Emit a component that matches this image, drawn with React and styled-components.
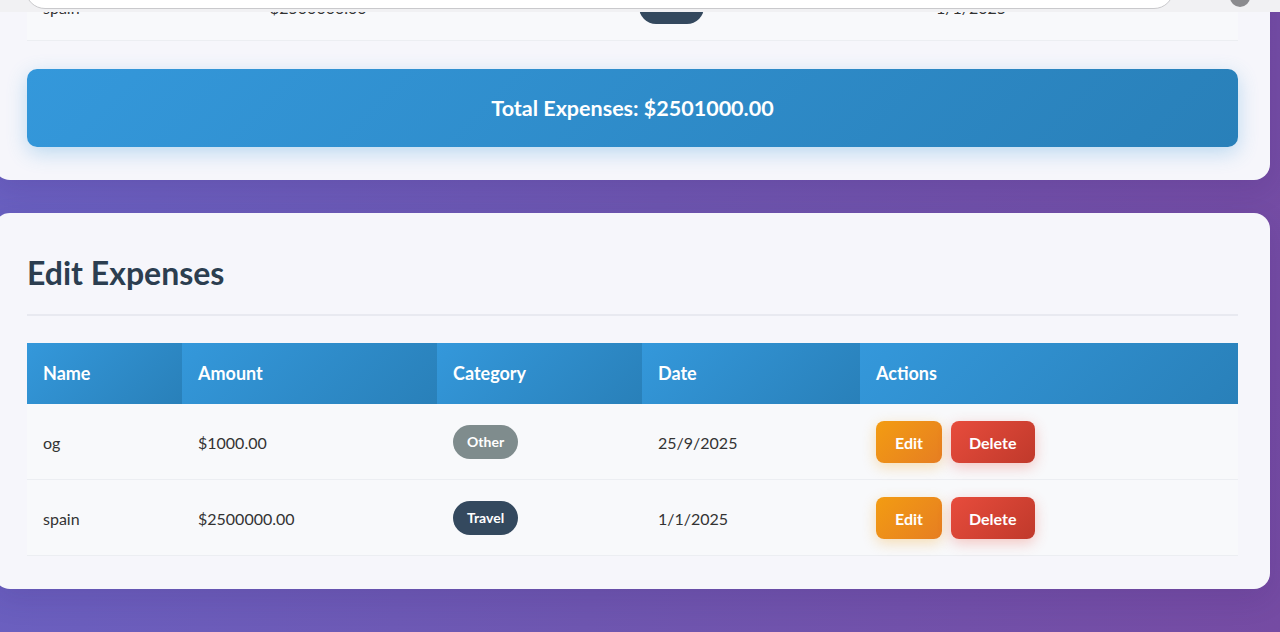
import React from 'react';
import styled, { createGlobalStyle } from 'styled-components';

const GlobalStyle = createGlobalStyle`
  html, body {
    margin: 0;
    min-height: 100%;
  }
  body {
    font-family: 'Segoe UI', Lato, 'Noto Sans', sans-serif;
    background: linear-gradient(100deg, #6a61c2 0%, #6e56b0 50%, #754ba3 100%);
    background-attachment: fixed;
    overflow: hidden;
  }
`;

const topRows = [
  { name: 'spain', amount: '$2500000.00', category: 'Travel', date: '1/1/2025' },
];

const rows = [
  { name: 'og', amount: '$1000.00', category: 'Other', date: '25/9/2025' },
  { name: 'spain', amount: '$2500000.00', category: 'Travel', date: '1/1/2025' },
];

const badgeColors = {
  Other: '#7f8c8d',
  Travel: '#34495e',
};

const App = () => {
  return (
    <>
      <GlobalStyle />
      <TopBar>
        <SearchBox />
        <Avatar />
      </TopBar>
      <Page>
        <Card>
          <Table>
            <colgroup>
              <col style={{ width: 227 }} />
              <col style={{ width: 369 }} />
              <col style={{ width: 297 }} />
              <col />
            </colgroup>
            <tbody>
              {topRows.map((r) => (
                <Row key={r.name}>
                  <Cell>{r.name}</Cell>
                  <Cell>{r.amount}</Cell>
                  <Cell>
                    <Badge $bg={badgeColors[r.category]}>{r.category}</Badge>
                  </Cell>
                  <Cell>{r.date}</Cell>
                </Row>
              ))}
            </tbody>
          </Table>
          <TotalBar>Total Expenses: $2501000.00</TotalBar>
        </Card>

        <Card>
          <Heading>Edit Expenses</Heading>
          <Table>
            <colgroup>
              <col style={{ width: 155 }} />
              <col style={{ width: 255 }} />
              <col style={{ width: 205 }} />
              <col style={{ width: 218 }} />
              <col />
            </colgroup>
            <thead>
              <tr>
                <HeadCell>Name</HeadCell>
                <HeadCell>Amount</HeadCell>
                <HeadCell>Category</HeadCell>
                <HeadCell>Date</HeadCell>
                <HeadCell>Actions</HeadCell>
              </tr>
            </thead>
            <tbody>
              {rows.map((r) => (
                <Row key={r.name}>
                  <Cell>{r.name}</Cell>
                  <Cell>{r.amount}</Cell>
                  <Cell>
                    <Badge $bg={badgeColors[r.category]}>{r.category}</Badge>
                  </Cell>
                  <Cell>{r.date}</Cell>
                  <Cell>
                    <Actions>
                      <ActionButton $variant='edit'>Edit</ActionButton>
                      <ActionButton $variant='delete'>Delete</ActionButton>
                    </Actions>
                  </Cell>
                </Row>
              ))}
            </tbody>
          </Table>
        </Card>
      </Page>
    </>
  );
};

export default App;

const TopBar = styled.div`
  position: fixed;
  top: 0;
  left: 0;
  right: 0;
  height: 12px;
  background: #f1f1f3;
  z-index: 10;
`;

const SearchBox = styled.div`
  position: absolute;
  left: 25px;
  width: 1147px;
  top: -31px;
  height: 38px;
  background: #fff;
  border: 1px solid #c9c9cc;
  border-radius: 20px;
`;

const Avatar = styled.div`
  position: absolute;
  left: 1230px;
  top: -13px;
  width: 20px;
  height: 20px;
  border-radius: 50%;
  background: #8b8b8e;
`;

const Page = styled.main`
  display: flex;
  flex-direction: column;
  gap: 33px;
  margin: -59px 10px 0 -6px;
  padding-bottom: 60px;
`;

const Card = styled.section`
  background: #f6f6fb;
  border-radius: 16px;
  padding: 32px 32px 33px 33px;
  box-shadow: 0 10px 30px rgba(40, 20, 90, 0.12);
`;

const Heading = styled.h2`
  margin: 0 0 27px;
  padding: 10px 0 23px;
  border-bottom: 2px solid #e8e9f0;
  font-size: 32px;
  line-height: 36px;
  font-weight: 700;
  color: #2c3e50;
`;

const Table = styled.table`
  width: 100%;
  border-collapse: collapse;
  table-layout: fixed;
`;

const HeadCell = styled.th`
  background: linear-gradient(135deg, #3498db 0%, #2980b9 100%);
  color: #fff;
  text-align: left;
  font-size: 18px;
  font-weight: 700;
  line-height: 21px;
  padding: 20px 16px;
`;

const Row = styled.tr`
  background: #f8f9fb;
  border-bottom: 1px solid #eceef2;
`;

const Cell = styled.td`
  padding: 17px 16px 16px;
  font-size: 16px;
  color: #333;
  vertical-align: middle;
`;

const Badge = styled.span`
  display: inline-block;
  padding: 8px 14px;
  border-radius: 18px;
  background: ${(p) => p.$bg};
  color: #fff;
  font-size: 14px;
  font-weight: 700;
  line-height: 18px;
`;

const Actions = styled.div`
  display: flex;
  gap: 9px;
`;

const ActionButton = styled.button`
  display: block;
  height: 42px;
  padding: 0 ${(p) => (p.$variant === 'edit' ? '19px' : '18px')};
  border: none;
  border-radius: 8px;
  font-family: inherit;
  font-size: 16px;
  font-weight: 700;
  color: #fff;
  background: ${(p) =>
    p.$variant === 'edit'
      ? 'linear-gradient(135deg, #f39c12 0%, #e67e22 100%)'
      : 'linear-gradient(135deg, #e74c3c 0%, #c0392b 100%)'};
  box-shadow: ${(p) =>
    p.$variant === 'edit'
      ? '0 4px 14px rgba(243, 156, 18, 0.3)'
      : '0 4px 14px rgba(231, 76, 60, 0.3)'};
`;

const TotalBar = styled.div`
  margin-top: 28px;
  padding: 24px;
  border-radius: 10px;
  background: linear-gradient(135deg, #3498db 0%, #2980b9 100%);
  color: #fff;
  text-align: center;
  font-size: 21.5px;
  font-weight: 700;
  line-height: 30px;
  box-shadow: 0 6px 20px rgba(52, 152, 219, 0.3);
`;
